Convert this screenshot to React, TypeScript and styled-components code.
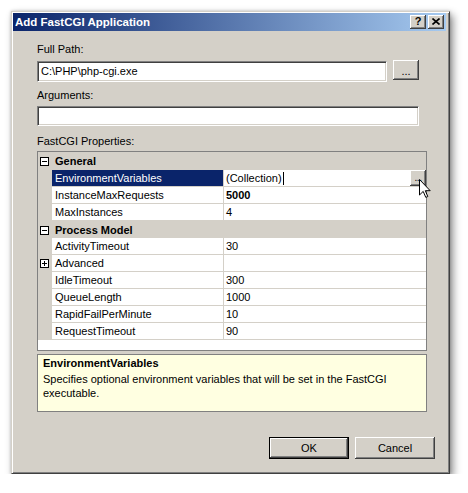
import React from "react";
import styled, { createGlobalStyle } from "styled-components";

const GlobalStyle = createGlobalStyle`
  html, body { margin: 0; padding: 0; background: #ffffff; }
  body {
    font-family: "Liberation Sans", Arial, sans-serif;
    font-size: 11px;
    color: #000;
  }
  * { box-sizing: border-box; }
`;

const Page = styled.div`
  padding: 11px 0 0 11px;
`;

const Window = styled.div`
  width: 439px;
  height: 463px;
  background: #d4d0c8;
  border: 1px solid;
  border-color: #d4d0c8 #404040 #404040 #d4d0c8;
  box-shadow: inset 1px 1px 0 #ffffff, inset -1px -1px 0 #808080,
    3px 4px 8px rgba(0, 0, 0, 0.45), 0 0 3px rgba(0, 0, 0, 0.2);
  padding: 1px 3px 3px 1px;
  display: flex;
  flex-direction: column;
`;

const TitleBar = styled.div`
  height: 18px;
  display: flex;
  align-items: center;
  padding: 0 2px 0 2px;
  background: linear-gradient(to right, #0a246a, #a6caf0);
`;

const TitleText = styled.div`
  flex: 1;
  color: #ffffff;
  font-weight: bold;
  font-size: 11.5px;
  line-height: 14px;
`;

const CaptionButton = styled.div`
  width: 16px;
  height: 14px;
  margin-left: 2px;
  background: #d4d0c8;
  box-shadow: inset -1px -1px 0 #404040, inset 1px 1px 0 #ffffff,
    inset -2px -2px 0 #808080, inset 2px 2px 0 #d4d0c8;
  display: flex;
  align-items: center;
  justify-content: center;
  font-weight: bold;
  font-size: 11px;
  line-height: 11px;
  padding-bottom: 1px;
`;

const Client = styled.div`
  flex: 1;
  display: flex;
  flex-direction: column;
  padding-left: 24px;
`;

const Label = styled.div<{ $mt: number }>`
  margin-top: ${(p) => p.$mt}px;
  line-height: 13px;
  height: 13px;
  white-space: nowrap;
`;

const FieldRow = styled.div<{ $mt: number }>`
  margin-top: ${(p) => p.$mt}px;
  display: flex;
  align-items: flex-start;
  gap: 6px;
`;

const Field = styled.div<{ $w: number; $h: number; $mt?: number }>`
  width: ${(p) => p.$w}px;
  height: ${(p) => p.$h}px;
  margin-top: ${(p) => p.$mt ?? 0}px;
  background: #ffffff;
  border: 1px solid;
  border-color: #808080 #ffffff #ffffff #808080;
  box-shadow: inset 1px 1px 0 #404040, inset -1px -1px 0 #d4d0c8;
  padding: 0 3px;
  display: flex;
  align-items: center;
  line-height: 13px;
  white-space: nowrap;
`;

const Button = styled.div<{ $w: number; $h: number; $default?: boolean }>`
  width: ${(p) => p.$w}px;
  height: ${(p) => p.$h}px;
  background: #d4d0c8;
  border: ${(p) => (p.$default ? "1px solid #000" : "none")};
  box-shadow: inset -1px -1px 0 #404040, inset 1px 1px 0 #ffffff,
    inset -2px -2px 0 #808080, inset 2px 2px 0 #d4d0c8;
  display: flex;
  align-items: center;
  justify-content: center;
  line-height: 13px;
`;

const EllipsisButton = styled(Button)`
  margin-top: -1px;
  padding-top: 3px;
`;

const Grid = styled.div`
  margin-top: 3px;
  width: 390px;
  height: 200px;
  border: 1px solid #808080;
  background: #ffffff;
  display: flex;
  flex-direction: column;
`;

const CategoryRow = styled.div<{ $h: number }>`
  height: ${(p) => p.$h}px;
  flex: none;
  background: #d4d0c8;
  display: flex;
  align-items: center;
  font-weight: bold;
  line-height: 13px;
  padding-top: 1px;
`;

const Expander = styled.div<{ $size: number }>`
  width: ${(p) => p.$size}px;
  height: ${(p) => p.$size}px;
  margin-left: 2px;
  border: 1px solid #000;
  background: #ffffff;
  position: relative;
  flex: none;
`;

const CategoryLabel = styled.div`
  margin-left: 6px;
`;

const PropRow = styled.div`
  height: 17px;
  flex: none;
  display: flex;
  border-bottom: 1px solid #d4d0c8;
`;

const Strip = styled.div`
  width: 14px;
  flex: none;
  background: #d4d0c8;
  display: flex;
  align-items: center;
`;

const NameCell = styled.div<{ $selected?: boolean }>`
  width: 172px;
  flex: none;
  border-right: 1px solid #d4d0c8;
  padding-left: 3px;
  background: ${(p) => (p.$selected ? "#0a246a" : "#ffffff")};
  color: ${(p) => (p.$selected ? "#ffffff" : "#000000")};
  display: flex;
  align-items: center;
  line-height: 13px;
  white-space: nowrap;
`;

const ValueCell = styled.div<{ $bold?: boolean }>`
  flex: 1;
  padding-left: 2px;
  display: flex;
  align-items: center;
  line-height: 13px;
  font-weight: ${(p) => (p.$bold ? "bold" : "normal")};
  white-space: nowrap;
`;

const Caret = styled.span`
  display: inline-block;
  width: 1px;
  height: 13px;
  background: #000;
  margin-left: 1px;
`;

const CellButtonWrap = styled.div`
  margin-left: auto;
  position: relative;
  width: 16px;
  height: 16px;
`;

const CellButton = styled.div`
  width: 16px;
  height: 16px;
  background: #d4d0c8;
  box-shadow: inset -1px -1px 0 #404040, inset 1px 1px 0 #ffffff,
    inset -2px -2px 0 #808080;
  font-size: 10px;
  line-height: 10px;
  display: flex;
  justify-content: center;
  align-items: flex-end;
  padding-bottom: 3px;
  letter-spacing: -0.5px;
`;

const Cursor = styled.svg`
  position: absolute;
  left: 9px;
  top: 9px;
  overflow: visible;
`;

const Description = styled.div`
  margin-top: 3px;
  width: 390px;
  height: 58px;
  border: 1px solid #808080;
  background: #ffffe1;
  padding: 2px 14px 0 5px;
  line-height: 14px;
`;

const DescTitle = styled.div`
  font-weight: bold;
  line-height: 13px;
  margin-bottom: 2px;
`;

const ButtonRow = styled.div`
  margin-top: 25px;
  display: flex;
  justify-content: flex-end;
  gap: 6px;
  padding-right: 11px;
`;

function ExpanderIcon({ open, size }: { open: boolean; size: number }) {
  const c = (size - 2) / 2;
  return (
    <Expander $size={size}>
      <svg width={size - 2} height={size - 2} style={{ display: "block" }}>
        <line x1={1} y1={c} x2={size - 3} y2={c} stroke="#000" strokeWidth={1} />
        {!open && <line x1={c} y1={1} x2={c} y2={size - 3} stroke="#000" strokeWidth={1} />}
      </svg>
    </Expander>
  );
}

type Prop = { name: string; value: string; bold?: boolean; expandable?: boolean };

const general: Prop[] = [
  { name: "InstanceMaxRequests", value: "5000", bold: true },
  { name: "MaxInstances", value: "4" },
];

const processModel: Prop[] = [
  { name: "ActivityTimeout", value: "30" },
  { name: "Advanced", value: "", expandable: true },
  { name: "IdleTimeout", value: "300" },
  { name: "QueueLength", value: "1000" },
  { name: "RapidFailPerMinute", value: "10" },
  { name: "RequestTimeout", value: "90" },
];

function Row({ p }: { p: Prop }) {
  return (
    <PropRow>
      <Strip>{p.expandable && <ExpanderIcon open={false} size={9} />}</Strip>
      <NameCell>{p.name}</NameCell>
      <ValueCell $bold={p.bold}>{p.value}</ValueCell>
    </PropRow>
  );
}

export default function App() {
  return (
    <Page>
      <GlobalStyle />
      <Window>
        <TitleBar>
          <TitleText>Add FastCGI Application</TitleText>
          <CaptionButton>?</CaptionButton>
          <CaptionButton>
            <svg width="8" height="7" viewBox="0 0 8 7">
              <path d="M0.5 0.5 L7.5 6.5 M7.5 0.5 L0.5 6.5" stroke="#000" strokeWidth="1.6" />
            </svg>
          </CaptionButton>
        </TitleBar>
        <Client>
          <Label $mt={12}>Full Path:</Label>
          <FieldRow $mt={5}>
            <Field $w={350} $h={21}>C:\PHP\php-cgi.exe</Field>
            <EllipsisButton $w={26} $h={20}>...</EllipsisButton>
          </FieldRow>
          <Label $mt={7}>Arguments:</Label>
          <Field $w={382} $h={20} $mt={4} />
          <Label $mt={9}>FastCGI Properties:</Label>
          <Grid>
            <CategoryRow $h={18}>
              <ExpanderIcon open size={9} />
              <CategoryLabel>General</CategoryLabel>
            </CategoryRow>
            <PropRow>
              <Strip />
              <NameCell $selected>EnvironmentVariables</NameCell>
              <ValueCell>
                (Collection)
                <Caret />
                <CellButtonWrap>
                  <CellButton>...</CellButton>
                  <Cursor width="12" height="19" viewBox="0 0 12 19">
                    <path
                      d="M0.5 0.5 L0.5 16 L4.2 12.4 L6.8 18.4 L8.8 17.5 L6.3 11.7 L11.2 11.7 Z"
                      fill="#fff"
                      stroke="#000"
                      strokeWidth="1"
                      strokeLinejoin="miter"
                    />
                  </Cursor>
                </CellButtonWrap>
              </ValueCell>
            </PropRow>
            {general.map((p) => (
              <Row key={p.name} p={p} />
            ))}
            <CategoryRow $h={17}>
              <ExpanderIcon open size={9} />
              <CategoryLabel>Process Model</CategoryLabel>
            </CategoryRow>
            {processModel.map((p) => (
              <Row key={p.name} p={p} />
            ))}
          </Grid>
          <Description>
            <DescTitle>EnvironmentVariables</DescTitle>
            Specifies optional environment variables that will be set in the FastCGI executable.
          </Description>
          <ButtonRow>
            <Button $w={80} $h={22} $default>
              OK
            </Button>
            <Button $w={80} $h={22}>
              Cancel
            </Button>
          </ButtonRow>
        </Client>
      </Window>
    </Page>
  );
}
